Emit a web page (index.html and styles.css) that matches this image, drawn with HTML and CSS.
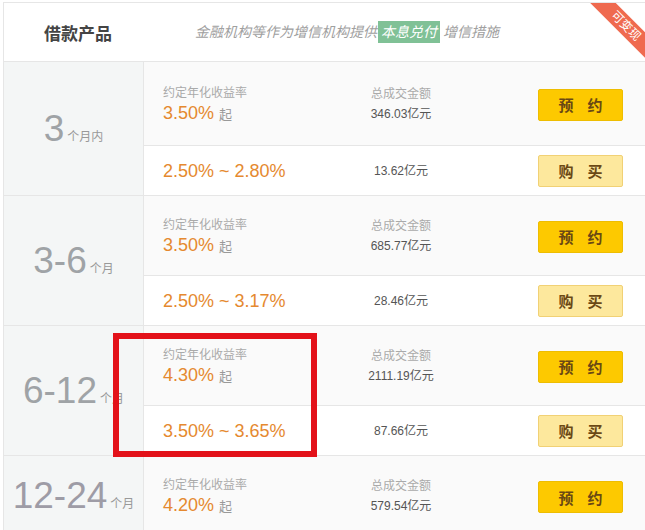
FILE: index.html
```html
<!DOCTYPE html>
<html lang="zh-CN">
<head>
  <meta charset="UTF-8" />
  <meta name="viewport" content="width=device-width, initial-scale=1.0"/>
  <title>借款产品</title>
  <link rel="stylesheet" href="styles.css">
</head>
<body>

  <div class="board">
    <div class="head">
      <h1 class="head-title">借款产品</h1>
      <p class="head-note">金融机构等作为增信机构提供<span class="tag">本息兑付</span>增信措施</p>
      <div class="ribbon">可变现</div>
    </div>

    <div class="list">
      <!-- 3 个月内 -->
      <div class="group">
        <div class="term"><span class="term-in"><span class="term-num">3</span><span class="term-unit">个月内</span></span></div>
        <div class="rows">
          <div class="row row-top">
            <div class="rate">
              <div class="label">约定年化收益率</div>
              <div class="val">3.50%<span class="from">起</span></div>
            </div>
            <div class="total">
              <div class="label">总成交金额</div>
              <div class="amt">346.03亿元</div>
            </div>
            <div class="act"><button class="btn btn-book">预约</button></div>
          </div>
          <div class="row row-bottom">
            <div class="rate"><div class="val">2.50% ~ 2.80%</div></div>
            <div class="total"><div class="amt">13.62亿元</div></div>
            <div class="act"><button class="btn btn-buy">购买</button></div>
          </div>
        </div>
      </div>

      <!-- 3-6 个月 -->
      <div class="group">
        <div class="term"><span class="term-in"><span class="term-num">3-6</span><span class="term-unit">个月</span></span></div>
        <div class="rows">
          <div class="row row-top">
            <div class="rate">
              <div class="label">约定年化收益率</div>
              <div class="val">3.50%<span class="from">起</span></div>
            </div>
            <div class="total">
              <div class="label">总成交金额</div>
              <div class="amt">685.77亿元</div>
            </div>
            <div class="act"><button class="btn btn-book">预约</button></div>
          </div>
          <div class="row row-bottom">
            <div class="rate"><div class="val">2.50% ~ 3.17%</div></div>
            <div class="total"><div class="amt">28.46亿元</div></div>
            <div class="act"><button class="btn btn-buy">购买</button></div>
          </div>
        </div>
      </div>

      <!-- 6-12 个月 -->
      <div class="group">
        <div class="term"><span class="term-in"><span class="term-num">6-12</span><span class="term-unit">个月</span></span></div>
        <div class="rows">
          <div class="row row-top">
            <div class="rate">
              <div class="label">约定年化收益率</div>
              <div class="val">4.30%<span class="from">起</span></div>
            </div>
            <div class="total">
              <div class="label">总成交金额</div>
              <div class="amt">2111.19亿元</div>
            </div>
            <div class="act"><button class="btn btn-book">预约</button></div>
          </div>
          <div class="row row-bottom">
            <div class="rate"><div class="val">3.50% ~ 3.65%</div></div>
            <div class="total"><div class="amt">87.66亿元</div></div>
            <div class="act"><button class="btn btn-buy">购买</button></div>
          </div>
        </div>
      </div>

      <!-- 12-24 个月 -->
      <div class="group">
        <div class="term term-long"><span class="term-in"><span class="term-num">12-24</span><span class="term-unit">个月</span></span></div>
        <div class="rows">
          <div class="row row-top">
            <div class="rate">
              <div class="label">约定年化收益率</div>
              <div class="val">4.20%<span class="from">起</span></div>
            </div>
            <div class="total">
              <div class="label">总成交金额</div>
              <div class="amt">579.54亿元</div>
            </div>
            <div class="act"><button class="btn btn-book">预约</button></div>
          </div>
        </div>
      </div>
    </div>

    <!-- red annotation frame -->
    <div class="mark"></div>
  </div>

</body>
</html>
```

FILE: styles.css
```css
/* General */
body {
  margin: 0;
  overflow: hidden;
  background: #fff;
  font-family: "Liberation Sans", "Noto Sans CJK SC", sans-serif;
  color: #555;
}

.board {
  position: relative;
  width: 643px;
  margin: 2px 0 0 3px;
}

/* Header */
.head {
  position: relative;
  overflow: hidden;
  display: flex;
  align-items: center;
  height: 60px;
  box-sizing: border-box;
  border: 1px solid #e6e6e6;
  padding-left: 40px;
}

.head-title {
  width: 151px;
  margin: 0;
  font-size: 17px;
  font-weight: bold;
  color: #444;
}

.head-note {
  margin: 0;
  font-size: 14px;
  font-style: italic;
  color: #a0a0a0;
}

.tag {
  display: inline-block;
  margin: 0 3px 0 1px;
  padding: 0 3px;
  line-height: 22px;
  background: #80c196;
  color: #fff;
}

.ribbon {
  position: absolute;
  left: 572px;
  top: 14px;
  width: 100px;
  height: 18px;
  line-height: 18px;
  text-align: center;
  font-size: 12px;
  color: #fff;
  background: #ef6a4f;
  transform: rotate(45deg);
}

/* List */
.list {
  border-left: 1px solid #e6e6e6;
}

.group {
  display: flex;
  border-bottom: 1px solid #e6e6e6;
}

.term {
  width: 139px;
  flex-shrink: 0;
  display: flex;
  align-items: center;
  justify-content: center;
  background: #f4f6f6;
  border-right: 1px solid #e6e6e6;
}

.term-in {
  white-space: nowrap;
}

.term-num {
  font-size: 37px;
  color: #9fa3a6;
}

.term-long .term-num {
  color: #9e9ca6;
}

.term-unit {
  margin-left: 3px;
  font-size: 12px;
  color: #999;
}

.rows {
  flex: 1;
}

.row {
  display: grid;
  grid-template-columns: 168px 140px 1fr;
  align-items: center;
  padding-left: 19px;
  box-sizing: border-box;
}

.row-top {
  height: 80px;
  padding-top: 2px;
  background: #fafafa;
  border-bottom: 1px solid #e6e6e6;
}

.group:first-child .row-top {
  height: 84px;
}

.group:last-child .row-top {
  border-bottom: none;
}

.row-bottom {
  height: 49px;
  background: #fff;
}

.label {
  font-size: 12px;
  line-height: 18px;
  color: #aaa;
}

.val {
  font-size: 18px;
  line-height: 22px;
  color: #e5892f;
}

.from {
  margin-left: 5px;
  font-size: 13px;
  color: #999;
}

.total {
  text-align: center;
}

.amt {
  font-size: 12px;
  line-height: 22px;
  color: #555;
}

/* Buttons */
.act {
  padding-left: 67px;
}

.btn {
  display: block;
  width: 85px;
  height: 32px;
  padding: 0;
  border-radius: 2px;
  font-family: "Noto Sans CJK SC", sans-serif;
  font-size: 15px;
  font-weight: bold;
  letter-spacing: 14px;
  text-indent: 14px;
  color: #6a4814;
  cursor: pointer;
}

.btn-book {
  background: #fdc900;
  border: 1px solid #eebd00;
}

.btn-buy {
  background: #fde89d;
  border: 1px solid #f1d175;
}

/* Annotation */
.mark {
  position: absolute;
  left: 110px;
  top: 331px;
  width: 204px;
  height: 124px;
  box-sizing: border-box;
  border: 6px solid #e3121a;
}
```
